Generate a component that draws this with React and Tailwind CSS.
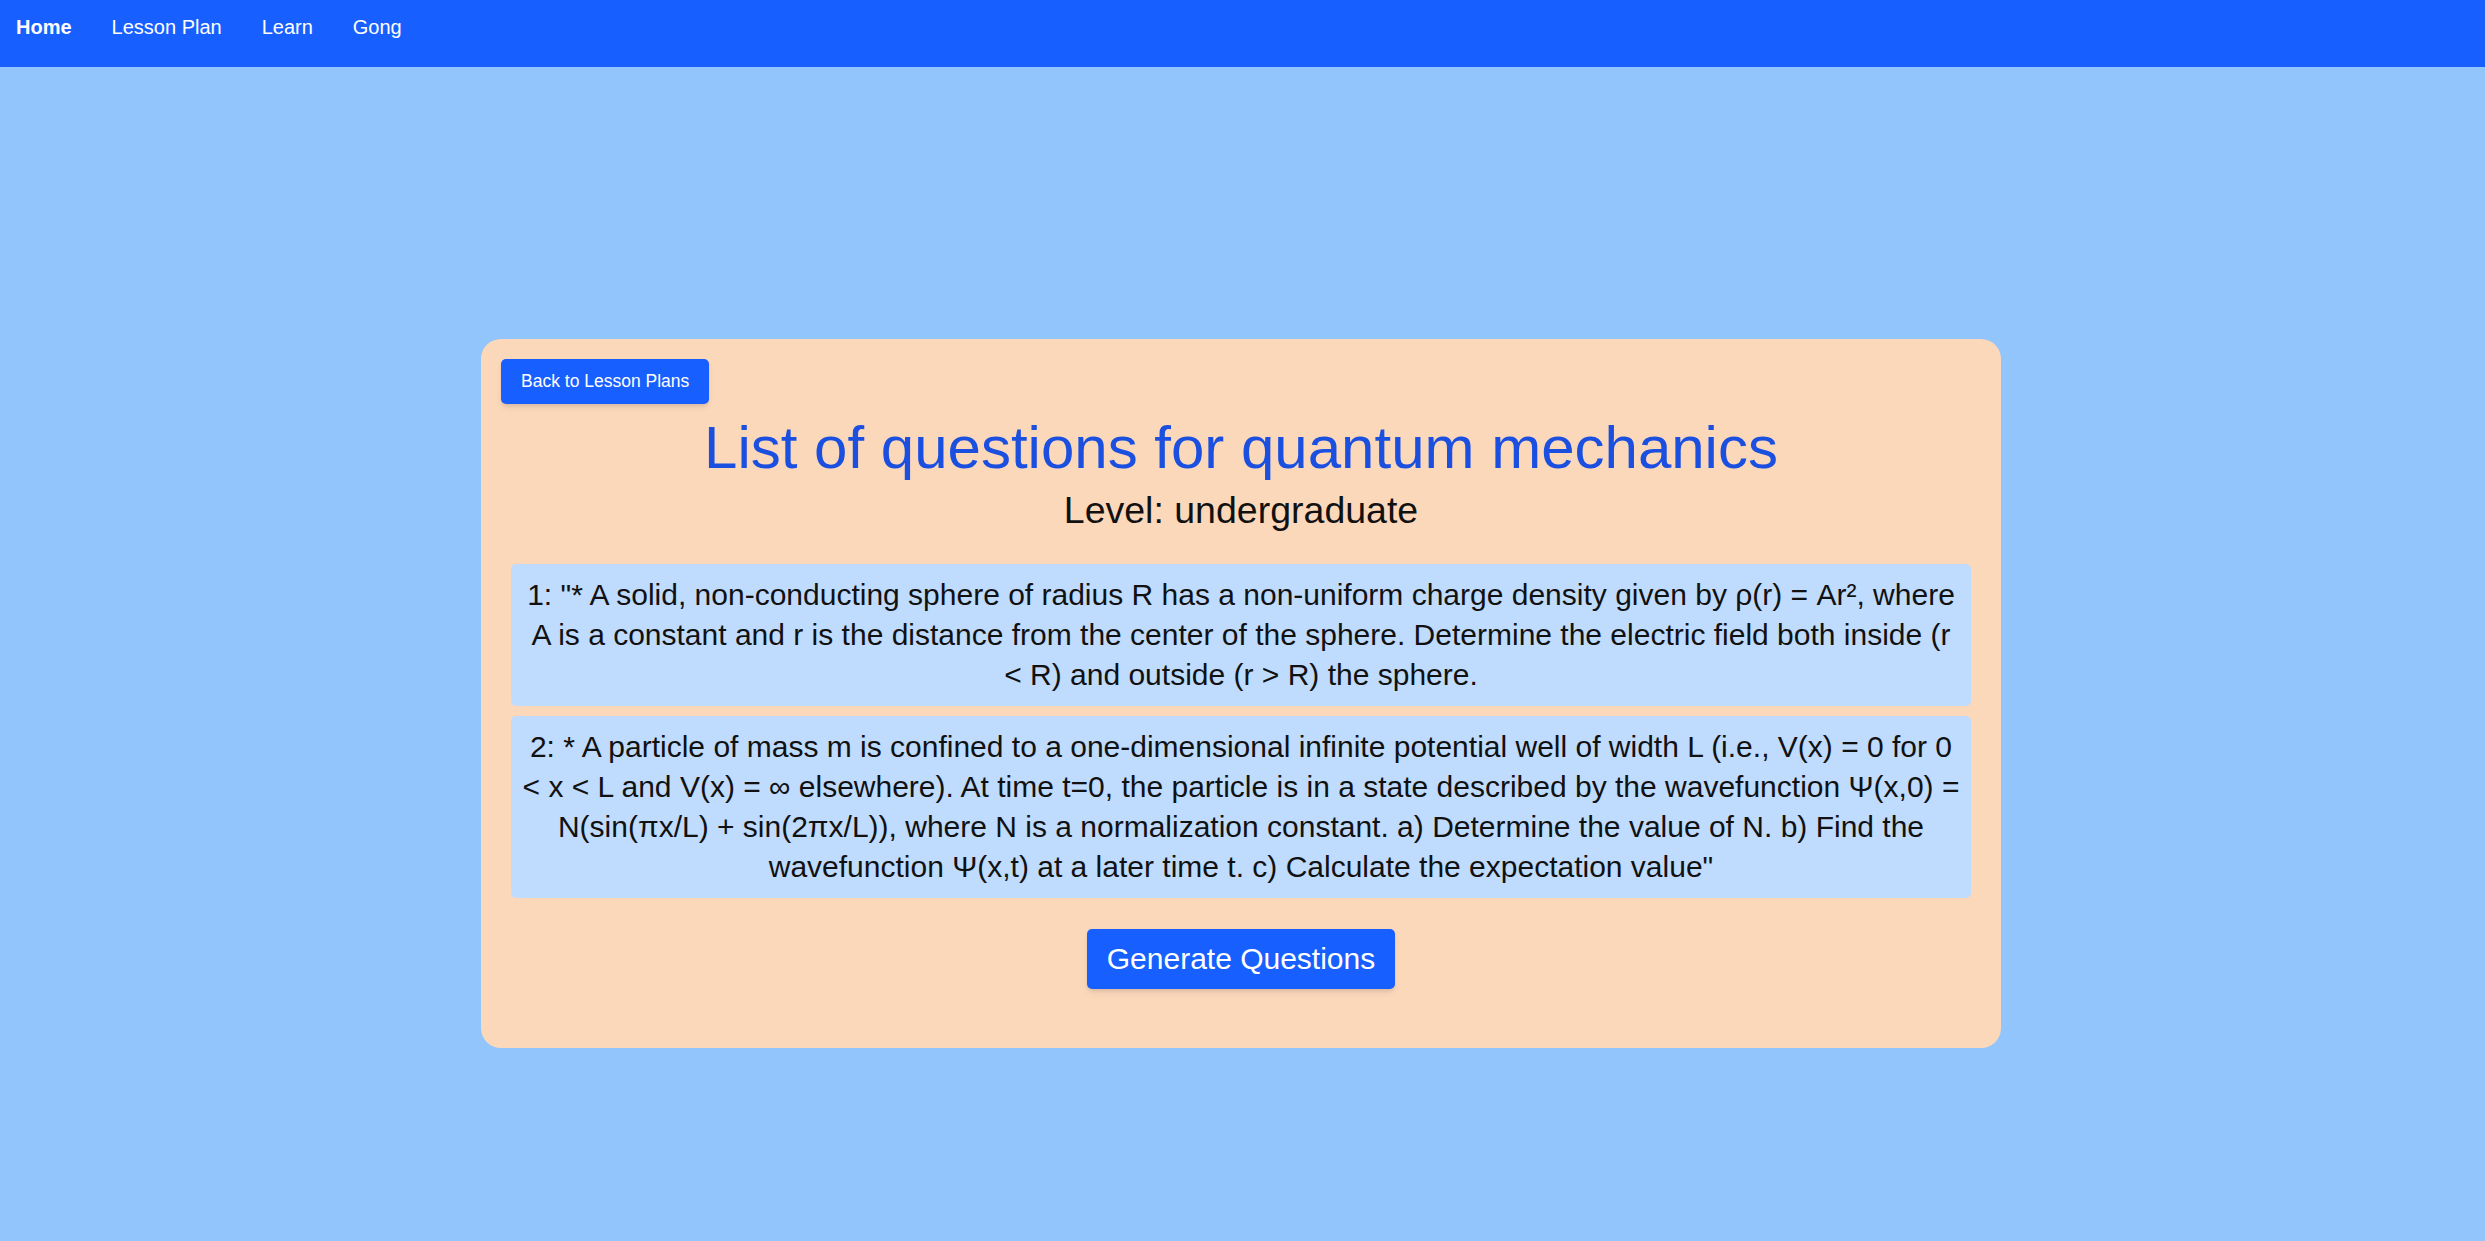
import React from "react";

const questions = [
  '1: "* A solid, non-conducting sphere of radius R has a non-uniform charge density given by ρ(r) = Ar², where A is a constant and r is the distance from the center of the sphere. Determine the electric field both inside (r < R) and outside (r > R) the sphere.',
  '2: * A particle of mass m is confined to a one-dimensional infinite potential well of width L (i.e., V(x) = 0 for 0 < x < L and V(x) = ∞ elsewhere). At time t=0, the particle is in a state described by the wavefunction Ψ(x,0) = N(sin(πx/L) + sin(2πx/L)), where N is a normalization constant. a) Determine the value of N. b) Find the wavefunction Ψ(x,t) at a later time t. c) Calculate the expectation value"',
];

export default function App() {
  return (
    <div className="min-h-screen bg-[#93c5fd] font-['Liberation_Sans',Arial,sans-serif]">
      <nav className="h-[67px] bg-[#185fff] flex items-start gap-10 pl-4 pt-[12px] text-[20px] leading-[30px] text-white">
        <a className="font-bold">Home</a>
        <a>Lesson Plan</a>
        <a>Learn</a>
        <a>Gong</a>
      </nav>

      <main className="flex justify-center pt-[272px] pb-[194px] pr-[3px]">
        <div className="w-[1520px] bg-[#fcd8bb] rounded-[20px] p-[20px] pb-[59px] flex flex-col">
          <div>
            <button className="bg-[#185fff] text-white text-[17.5px] leading-[25px] px-[20px] py-[10px] rounded-[5px] shadow-md">
              Back to Lesson Plans
            </button>
          </div>
          <h1 className="mt-[14px] text-center text-[60px] leading-[60px] text-[#1a4fe0]">
            List of questions for quantum mechanics
          </h1>
          <h2 className="mt-[10px] text-center text-[37.5px] leading-[45px] text-[#111]">
            Level: undergraduate
          </h2>

          <div className="mx-[10px] mt-[31px] flex flex-col gap-[10px]">
            {questions.map((q, i) => (
              <div key={i} className="bg-[#bfdbfe] rounded-[5px] px-[10px] py-[11px] text-center text-[30px] leading-[40px] text-[#111]">
                {q}
              </div>
            ))}
          </div>

          <div className="mt-[31px] flex justify-center">
            <button className="bg-[#185fff] text-white text-[30px] leading-[40px] px-[20px] py-[10px] rounded-[5px] shadow-md">
              Generate Questions
            </button>
          </div>
        </div>
      </main>
    </div>
  );
}
